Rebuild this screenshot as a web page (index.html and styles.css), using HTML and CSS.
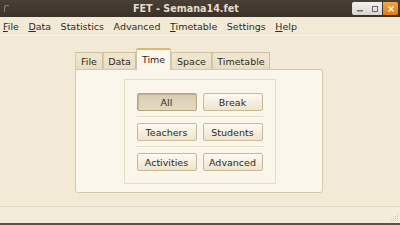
FILE: index.html
```html
<!DOCTYPE html>
<html>
<head>
<meta charset="utf-8">
<link rel="stylesheet" href="styles.css">
</head>
<body>
<div class="window">
  <div class="titlebar">
    <span class="appicon"></span>
    <span class="title">FET - Semana14.fet</span>
    <div class="wbuttons">
      <div class="wgroup">
        <span class="wbtn"><svg width="10" height="10" viewBox="0 0 10 10"><rect x="2" y="6" width="6" height="1.5" fill="#6a6a6a"/></svg></span>
        <span class="wbtn"><svg width="10" height="10" viewBox="0 0 10 10"><rect x="2.5" y="2.5" width="5" height="5" fill="none" stroke="#6a6a6a" stroke-width="1"/></svg></span>
      </div>
      <span class="wclose"><svg width="10" height="10" viewBox="0 0 10 10"><path d="M2.5 2.5 L7.5 7.5 M7.5 2.5 L2.5 7.5" stroke="#fff3d6" stroke-width="1.5"/></svg></span>
    </div>
  </div>
  <div class="menubar">
    <span class="mi"><u>F</u>ile</span>
    <span class="mi"><u>D</u>ata</span>
    <span class="mi">Statistics</span>
    <span class="mi">Advanced</span>
    <span class="mi"><u>T</u>imetable</span>
    <span class="mi">Settings</span>
    <span class="mi"><u>H</u>elp</span>
  </div>
  <div class="main">
    <div class="tabs">
      <span class="tab w-file">File</span>
      <span class="tab w-data">Data</span>
      <span class="tab sel w-time">Time</span>
      <span class="tab w-space">Space</span>
      <span class="tab w-tt">Timetable</span>
    </div>
    <div class="panel">
      <div class="group">
        <div class="row">
          <span class="btn pressed">All</span>
          <span class="btn">Break</span>
        </div>
        <div class="sep"></div>
        <div class="row">
          <span class="btn">Teachers</span>
          <span class="btn">Students</span>
        </div>
        <div class="sep"></div>
        <div class="row">
          <span class="btn">Activities</span>
          <span class="btn">Advanced</span>
        </div>
      </div>
    </div>
  </div>
  <div class="statusbar">
    <svg class="grip" width="10" height="10" viewBox="0 0 10 10">
      <g fill="#cfc3a6">
        <rect x="8" y="2" width="1" height="1"/>
        <rect x="6" y="4" width="1" height="1"/><rect x="8" y="4" width="1" height="1"/>
        <rect x="4" y="6" width="1" height="1"/><rect x="6" y="6" width="1" height="1"/><rect x="8" y="6" width="1" height="1"/>
        <rect x="2" y="8" width="1" height="1"/><rect x="4" y="8" width="1" height="1"/><rect x="6" y="8" width="1" height="1"/><rect x="8" y="8" width="1" height="1"/>
      </g>
    </svg>
  </div>
  <div class="bottomline"></div>
</div>
</body>
</html>
```
FILE: styles.css
```css
html, body {
  margin: 0;
  padding: 0;
}
body {
  width: 400px;
  height: 225px;
  overflow: hidden;
  font-family: "DejaVu Sans", sans-serif;
  font-size: 9.5px;
  color: #2e2a22;
  background: #f2ead6;
}
.window {
  display: flex;
  flex-direction: column;
  width: 400px;
  height: 225px;
}
.titlebar {
  height: 17px;
  flex: none;
  display: flex;
  align-items: center;
  position: relative;
  background: linear-gradient(#4a4036, #3a3129);
}
.appicon {
  width: 4px;
  height: 6px;
  margin-left: 4px;
  border-left: 1px solid #8a8070;
  border-top: 1px solid #8a8070;
  border-radius: 3px 0 0 0;
}
.title {
  position: absolute;
  left: 133px;
  top: 2px;
  font-weight: bold;
  font-size: 9.6px;
  color: #e4ddcc;
  line-height: 13px;
}
.wbuttons {
  margin-left: auto;
  margin-right: 2px;
  display: flex;
  gap: 1px;
  height: 13px;
}
.wgroup {
  display: flex;
  width: 30px;
  background: linear-gradient(#f4f2ee, #d8d5cf);
  border-radius: 2px 0 0 2px;
  justify-content: space-around;
  align-items: center;
}
.wbtn {
  display: flex;
}
.wclose {
  width: 15px;
  background: linear-gradient(#f3a64a, #e07a18);
  border-radius: 0 2px 2px 0;
  display: flex;
  align-items: center;
  justify-content: center;
}
.menubar {
  height: 19px;
  flex: none;
  display: flex;
  align-items: center;
  padding-left: 3px;
  gap: 9.5px;
  background: #f2ead6;
  border-bottom: 1px solid #f8f2e4;
  box-sizing: border-box;
  color: #2e2a22;
}
.mi u {
  text-decoration-thickness: 1px;
  text-underline-offset: 1px;
}
.main {
  flex: 1;
  padding-top: 12px;
  box-sizing: border-box;
}
.tabs {
  display: flex;
  align-items: flex-end;
  margin-left: 75px;
  height: 21px;
  position: relative;
  z-index: 1;
}
.tab {
  box-sizing: border-box;
  height: 17px;
  display: flex;
  align-items: center;
  justify-content: center;
  background: linear-gradient(#f1e8d2, #e8ddc2);
  border: 1px solid #cdbf9e;
  border-bottom: none;
  border-left-color: #d8cbac;
  color: #2e2a22;
}
.tab.sel {
  height: 22px;
  margin-bottom: -1px;
  background: #fbf6eb;
  border-color: #d0c2a2;
  border-top: 2px solid #e2b66c;
  border-radius: 2px 2px 0 0;
  padding-bottom: 2px;
}
.w-file { width: 28px; }
.w-data { width: 33px; }
.w-time { width: 35px; }
.w-space { width: 41px; }
.w-tt { width: 58px; }
.panel {
  margin-left: 75px;
  width: 248px;
  height: 124px;
  box-sizing: border-box;
  background: #fbf6eb;
  border: 1px solid #d6c7a6;
  border-radius: 0 2px 3px 3px;
  padding: 9px 0;
  display: flex;
  justify-content: center;
}
.group {
  width: 152px;
  height: 105px;
  box-sizing: border-box;
  border: 1px solid #e6dcc6;
  padding: 13px 12px 0 12px;
  display: flex;
  flex-direction: column;
  margin-left: 1px;
}
.row {
  display: flex;
  gap: 6px;
}
.sep {
  height: 1px;
  background: #e4dac4;
  margin: 5px 0 5px;
  border-bottom: 1px solid #fffdf8;
}
.btn {
  box-sizing: border-box;
  width: 60px;
  height: 18px;
  display: flex;
  align-items: center;
  justify-content: center;
  border: 1px solid #c9b998;
  border-radius: 2px;
  background: linear-gradient(#fdfaf2, #eee4cc);
  color: #2e2a22;
}
.btn.pressed {
  background: linear-gradient(#d8cdb2, #e4dac2);
  border-color: #b5a57f;
  box-shadow: inset 1px 1px 1px rgba(120, 100, 60, 0.25);
}
.statusbar {
  height: 17px;
  flex: none;
  border-top: 1px solid #e4dbc5;
  background: #f4ecda;
  display: flex;
  justify-content: flex-end;
  align-items: flex-end;
  box-sizing: border-box;
}
.grip {
  margin: 0 1px 1px 0;
}
.bottomline {
  height: 2px;
  flex: none;
  background: #5c5244;
}
```
